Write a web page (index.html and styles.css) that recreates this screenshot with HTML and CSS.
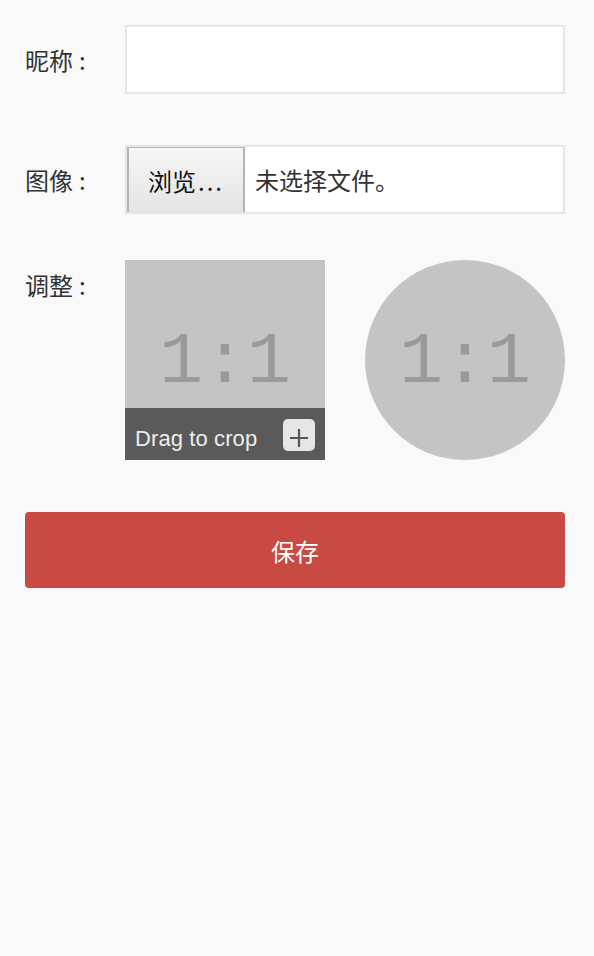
FILE: index.html
```html
<!DOCTYPE html>
<html lang="zh-CN">
<head>
<meta charset="utf-8">
<link rel="stylesheet" href="styles.css">
</head>
<body>
<form class="form">
  <div class="row">
    <label class="label">昵称<span class="colon">:</span></label>
    <div class="text-input"></div>
  </div>
  <div class="row">
    <label class="label">图像<span class="colon">:</span></label>
    <div class="file-input">
      <span class="file-btn">浏览<span class="dots">...</span></span>
      <span class="file-name">未选择文件。</span>
    </div>
  </div>
  <div class="row row-adjust">
    <label class="label label-top">调整<span class="colon">:</span></label>
    <div class="previews">
      <div class="crop">
        <span class="ratio">1:1</span>
        <div class="crop-bar">
          <span class="crop-text">Drag to crop</span>
          <span class="crop-plus">
            <svg width="20" height="20" viewBox="0 0 20 20"><path d="M10 1V19M1 10H19" stroke="#555" stroke-width="2.2" fill="none"/></svg>
          </span>
        </div>
      </div>
      <div class="circle"><span class="ratio">1:1</span></div>
    </div>
  </div>
  <button type="button" class="save">保存</button>
</form>
</body>
</html>
```
FILE: styles.css
```css
html, body {
  margin: 0;
  padding: 0;
  background: #f9f9f9;
}
body {
  font-family: "Noto Sans CJK SC", "Liberation Sans", sans-serif;
  color: #333;
}
.form {
  padding: 25px;
  display: flex;
  flex-direction: column;
}
.row {
  display: grid;
  grid-template-columns: 100px 440px;
  align-items: center;
}
.row + .row {
  margin-top: 51px;
}
.row.row-adjust {
  margin-top: 46px;
  align-items: start;
}
.label {
  font-size: 24px;
  color: #333;
  line-height: 30px;
}
.colon {
  margin-left: 6px;
}
.label-top {
  line-height: 50px;
}
.text-input {
  height: 65px;
  background: #fff;
  border: 2px solid #e6e6e6;
}
.file-input {
  height: 65px;
  background: #fff;
  border: 2px solid #e6e6e6;
  display: flex;
  align-items: stretch;
}
.file-btn {
  width: 118px;
  box-sizing: border-box;
  border: 2px solid #b4b4b4;
  border-top-width: 1px;
  border-bottom: none;
  background: linear-gradient(#f6f6f6, #e4e4e4);
  color: #111;
  font-size: 24px;
  display: flex;
  align-items: center;
  justify-content: center;
}
.dots {
  letter-spacing: 2px;
  margin-left: 2px;
}
.file-name {
  font-size: 24px;
  color: #333;
  display: flex;
  align-items: center;
  padding-left: 10px;
}
.previews {
  display: flex;
  justify-content: space-between;
}
.crop, .circle {
  width: 200px;
  height: 200px;
  background: #c4c4c4;
  position: relative;
  display: flex;
  align-items: center;
  justify-content: center;
}
.circle {
  border-radius: 50%;
}
.ratio {
  font-family: "Liberation Mono", monospace;
  font-size: 73px;
  color: #9a9a9a;
  line-height: 1;
  margin-top: 4px;
}
.crop-bar {
  position: absolute;
  left: 0;
  right: 0;
  bottom: 0;
  height: 52px;
  background: #5a5a5a;
  display: flex;
  align-items: center;
  justify-content: space-between;
  padding: 0 10px;
}
.crop-text {
  font-family: "Liberation Sans", Arial, sans-serif;
  font-size: 22px;
  color: #eee;
  letter-spacing: 0.1px;
  margin-top: 10px;
}
.crop-plus {
  width: 32px;
  height: 32px;
  border-radius: 5px;
  background: #e6e6e6;
  display: flex;
  align-items: flex-end;
  justify-content: center;
  padding-bottom: 3px;
  box-sizing: border-box;
  margin-top: 1px;
}
.save {
  margin-top: 52px;
  width: 540px;
  height: 76px;
  border: none;
  border-radius: 4px;
  background: #c84a43;
  color: #fff;
  font-family: "Noto Sans CJK SC", sans-serif;
  font-size: 24px;
}
```
